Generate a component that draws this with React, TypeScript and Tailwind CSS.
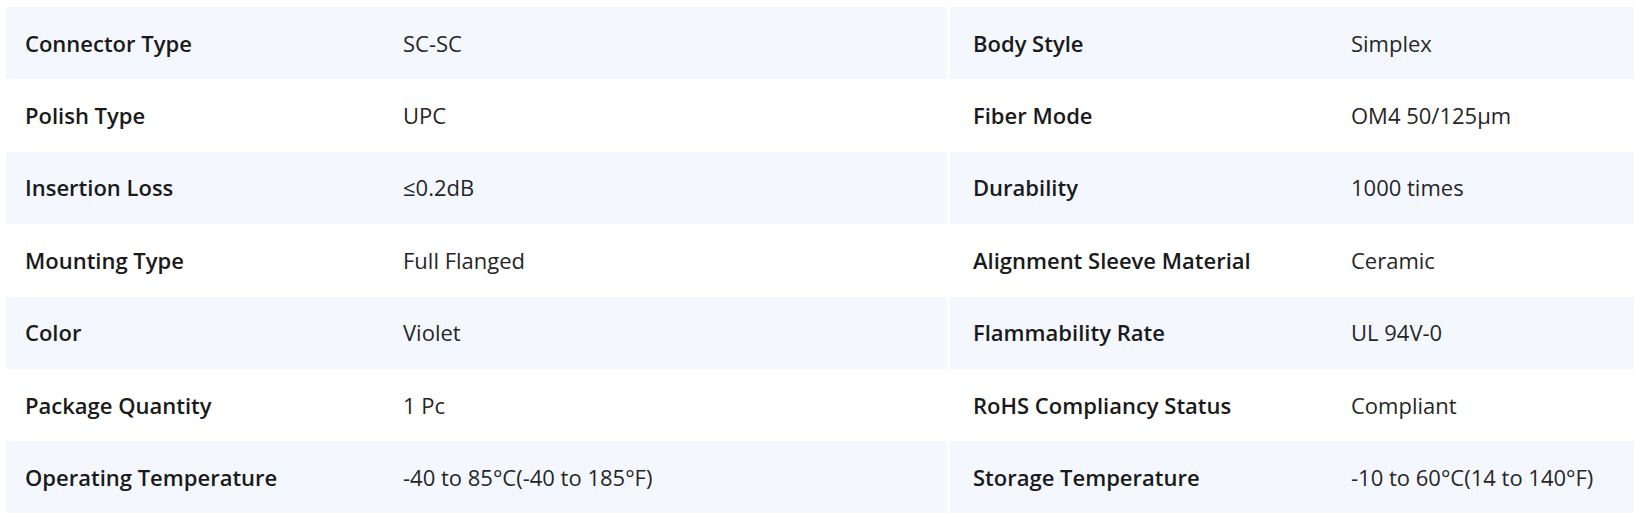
import React from "react";

const rows: [string, string, string, string][] = [
  ["Connector Type", "SC-SC", "Body Style", "Simplex"],
  ["Polish Type", "UPC", "Fiber Mode", "OM4 50/125μm"],
  ["Insertion Loss", "≤0.2dB", "Durability", "1000 times"],
  ["Mounting Type", "Full Flanged", "Alignment Sleeve Material", "Ceramic"],
  ["Color", "Violet", "Flammability Rate", "UL 94V-0"],
  ["Package Quantity", "1 Pc", "RoHS Compliancy Status", "Compliant"],
  ["Operating Temperature", "-40 to 85°C(-40 to 185°F)", "Storage Temperature", "-10 to 60°C(14 to 140°F)"],
];

export default function App() {
  return (
    <div
      className="w-full h-[513px] overflow-hidden bg-white pl-[6px] pt-[7px]"
      style={{ fontFamily: '"Open Sans", "Noto Sans", sans-serif' }}
    >
      <div className="flex flex-col">
        {rows.map((r, i) => (
          <div key={i} className="grid grid-cols-[941px_1fr] gap-x-[3px] h-[72.4px]">
            <div className={`flex items-center ${i % 2 === 0 ? "bg-[#f4f8fe]" : "bg-white"}`}>
              <div className="w-[397px] pl-[19px] text-[22px] font-semibold text-[#1a1a1a]">{r[0]}</div>
              <div className="text-[22px] text-[#262626]">{r[1]}</div>
            </div>
            <div className={`flex items-center ${i % 2 === 0 ? "bg-[#f4f8fe]" : "bg-white"}`}>
              <div className="w-[401px] pl-[23px] text-[22px] font-semibold text-[#1a1a1a]">{r[2]}</div>
              <div className="text-[22px] text-[#262626]">{r[3]}</div>
            </div>
          </div>
        ))}
      </div>
    </div>
  );
}
